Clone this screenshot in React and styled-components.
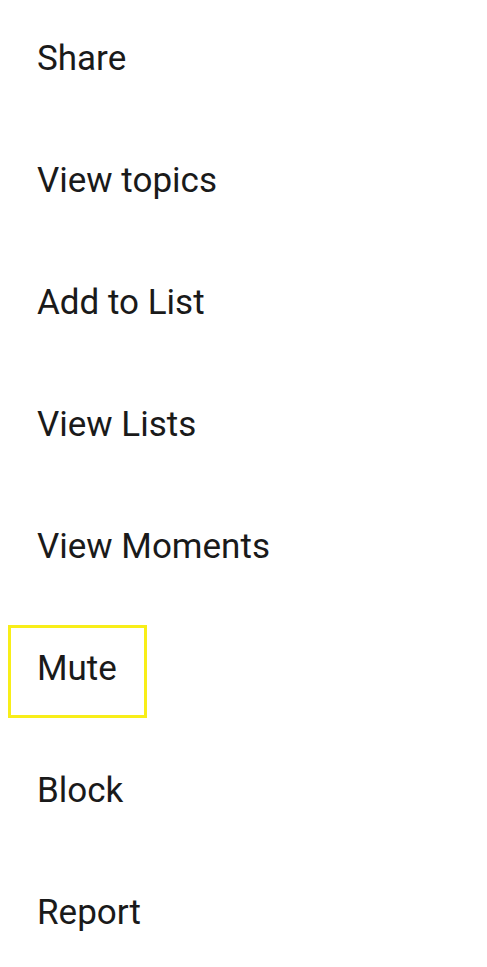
import React from 'react';
import styled, { createGlobalStyle, css } from 'styled-components';

const GlobalStyle = createGlobalStyle`
  html, body {
    margin: 0;
    padding: 0;
    background: #ffffff;
  }
  body {
    font-family: Roboto, "Noto Sans", "Liberation Sans", sans-serif;
  }
`;

const Menu = styled.ul`
  list-style: none;
  margin: 0;
  padding: 0 0 0 8px;
  width: 487px;
  box-sizing: border-box;
`;

const MenuRow = styled.li`
  height: 122px;
  display: flex;
  align-items: center;
`;

const Label = styled.span`
  display: inline-flex;
  align-items: center;
  box-sizing: border-box;
  height: 93px;
  padding: 0 27px 6px 26px;
  border: 3px solid transparent;
  font-size: 35px;
  color: #1a1a1a;
  ${(props) =>
    props.focused &&
    css`
      border-color: #f8ee18;
    `}
`;

const items = [
  'Share',
  'View topics',
  'Add to List',
  'View Lists',
  'View Moments',
  'Mute',
  'Block',
  'Report',
];

export default function App() {
  return (
    <>
      <GlobalStyle />
      <Menu>
        {items.map((item) => (
          <MenuRow key={item}>
            <Label focused={item === 'Mute'}>{item}</Label>
          </MenuRow>
        ))}
      </Menu>
    </>
  );
}
